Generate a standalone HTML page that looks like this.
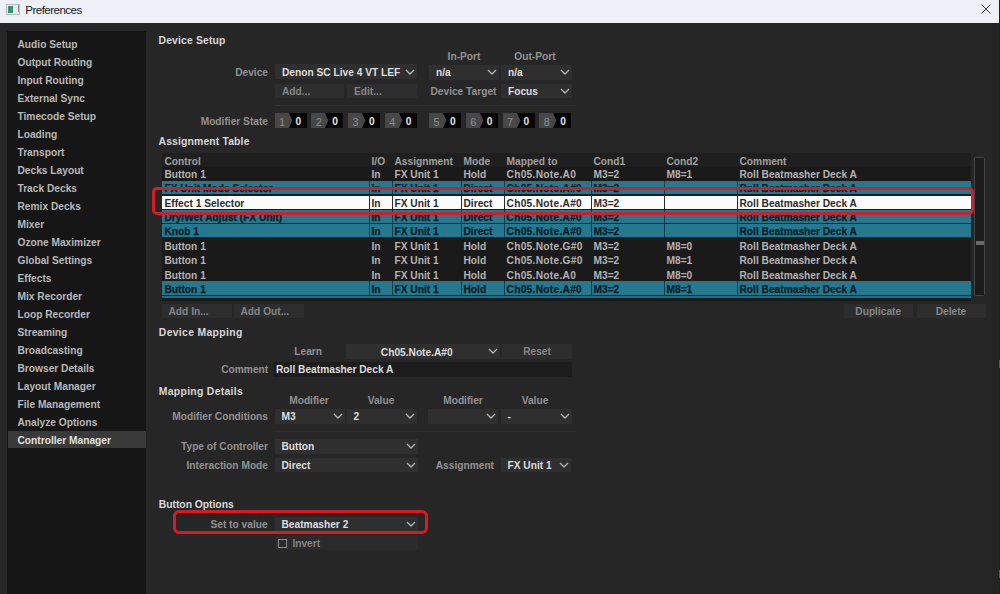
<!DOCTYPE html><html><head><meta charset="utf-8"><style>
*{margin:0;padding:0;box-sizing:border-box}
html,body{width:1000px;height:594px;overflow:hidden;background:#262626}
body>div,body>svg{position:absolute}
.t{position:absolute;white-space:nowrap;font-family:"Liberation Sans",sans-serif;font-weight:bold;font-size:10.2px;line-height:0;}
.t::before{content:"";}
.side{color:#b8b8b8}
.sel{color:#e0e0e0}
.hdr{color:#d8d8d8;font-size:10.4px}
.lbl{color:#929292}
.val{color:#dedede}
.btn{color:#858585}
.th{color:#a0a0a0}
.td{color:#b2b2b2}
.tt{color:#071f28;-webkit-text-stroke:0.25px #071f28}
.tw{color:#2a2a2a}
</style></head><body>
<div style="left:0;top:0;width:1000px;height:23px;background:#eef0f8"></div>
<div style="left:6px;top:3.5px;width:13.5px;height:11px;background:#e4ebe9;border:1px solid #b5bfbc"></div>
<div style="left:8px;top:5.5px;width:5px;height:7px;background:#3f8f76"></div>
<div style="left:17.5px;top:4.5px;width:1px;height:7.5px;background:#888"></div>
<div class="t" style="left:25.3px;top:9.5px;font-weight:normal;font-size:11.6px;letter-spacing:-0.55px;color:#1a1a1a">Preferences</div>
<svg width="12" height="12" viewBox="0 0 12 12" style="position:absolute;left:979.5px;top:3px"><path d="M1.5 1.5 L10.5 10.5 M10.5 1.5 L1.5 10.5" stroke="#3c3c3c" stroke-width="1" fill="none"/></svg>
<div style="left:7px;top:31px;width:139px;height:563px;background:#161616"></div>
<div class="t side" style="left:17.5px;top:44.70px;">Audio Setup</div>
<div class="t side" style="left:17.5px;top:62.70px;">Output Routing</div>
<div class="t side" style="left:17.5px;top:80.70px;">Input Routing</div>
<div class="t side" style="left:17.5px;top:98.70px;">External Sync</div>
<div class="t side" style="left:17.5px;top:116.70px;">Timecode Setup</div>
<div class="t side" style="left:17.5px;top:134.70px;">Loading</div>
<div class="t side" style="left:17.5px;top:152.70px;">Transport</div>
<div class="t side" style="left:17.5px;top:170.70px;">Decks Layout</div>
<div class="t side" style="left:17.5px;top:188.70px;">Track Decks</div>
<div class="t side" style="left:17.5px;top:206.70px;">Remix Decks</div>
<div class="t side" style="left:17.5px;top:224.70px;">Mixer</div>
<div class="t side" style="left:17.5px;top:242.70px;">Ozone Maximizer</div>
<div class="t side" style="left:17.5px;top:260.70px;">Global Settings</div>
<div class="t side" style="left:17.5px;top:278.70px;">Effects</div>
<div class="t side" style="left:17.5px;top:296.70px;">Mix Recorder</div>
<div class="t side" style="left:17.5px;top:314.70px;">Loop Recorder</div>
<div class="t side" style="left:17.5px;top:332.70px;">Streaming</div>
<div class="t side" style="left:17.5px;top:350.70px;">Broadcasting</div>
<div class="t side" style="left:17.5px;top:368.70px;">Browser Details</div>
<div class="t side" style="left:17.5px;top:386.70px;">Layout Manager</div>
<div class="t side" style="left:17.5px;top:404.70px;">File Management</div>
<div class="t side" style="left:17.5px;top:422.70px;">Analyze Options</div>
<div style="left:8px;top:430.5px;width:138px;height:17.5px;background:#3a3a3a"></div>
<div class="t side sel" style="left:17.5px;top:440.70px;">Controller Manager</div>
<div style="left:992px;top:23px;width:6.5px;height:571px;background:#242424"></div>
<div style="left:998.5px;top:0px;width:1.5px;height:594px;background:#1e1e1e"></div>
<div class="t hdr" style="left:158.5px;top:41.40px;letter-spacing:0.153px;">Device Setup</div>
<div class="t lbl" style="right:732.00px;top:73.00px;">Device</div>
<div style="left:275px;top:64px;width:142px;height:15px;background:#2f2f2f"></div>
<div class="t val" style="left:282px;top:72.60px;">Denon SC Live 4 VT LEF</div>
<svg width="10" height="6" viewBox="0 0 10 6" style="position:absolute;left:405px;top:68.5px"><path d="M1 1 L5 5 L9 1" fill="none" stroke="#b4b4b4" stroke-width="1.3"/></svg>
<div class="t lbl" style="left:264.00px;width:400px;text-align:center;top:56.60px;">In-Port</div>
<div class="t lbl" style="left:335.00px;width:400px;text-align:center;top:56.60px;">Out-Port</div>
<div style="left:429px;top:65px;width:70px;height:14.5px;background:#2f2f2f"></div>
<div class="t val" style="left:436px;top:73.10px;">n/a</div>
<svg width="10" height="6" viewBox="0 0 10 6" style="position:absolute;left:487px;top:69.25px"><path d="M1 1 L5 5 L9 1" fill="none" stroke="#b4b4b4" stroke-width="1.3"/></svg>
<div style="left:501px;top:65px;width:71px;height:14.5px;background:#2f2f2f"></div>
<div class="t val" style="left:508px;top:73.10px;">n/a</div>
<svg width="10" height="6" viewBox="0 0 10 6" style="position:absolute;left:560px;top:69.25px"><path d="M1 1 L5 5 L9 1" fill="none" stroke="#b4b4b4" stroke-width="1.3"/></svg>
<div style="left:275px;top:83.5px;width:69px;height:14px;background:#2d2d2d"></div>
<div class="t btn" style="left:282px;top:91.50px;">Add...</div>
<div style="left:347px;top:83.5px;width:70px;height:14px;background:#2d2d2d"></div>
<div class="t btn" style="left:354px;top:91.50px;">Edit...</div>
<div class="t lbl" style="right:503.50px;top:91.50px;">Device Target</div>
<div style="left:501px;top:83.5px;width:71px;height:14.5px;background:#2f2f2f"></div>
<div class="t val" style="left:508px;top:91.60px;">Focus</div>
<svg width="10" height="6" viewBox="0 0 10 6" style="position:absolute;left:560px;top:87.75px"><path d="M1 1 L5 5 L9 1" fill="none" stroke="#b4b4b4" stroke-width="1.3"/></svg>
<div style="left:275px;top:105px;width:301px;height:1px;background:#303030"></div>
<div style="left:274px;top:431px;width:301px;height:1px;background:#2c2c2c"></div>
<div style="left:998.5px;top:360px;width:1.5px;height:8px;background:#5a5a5a"></div>
<div style="left:998.5px;top:570px;width:1.5px;height:8px;background:#5a5a5a"></div>
<div class="t lbl" style="right:732.00px;top:121.50px;">Modifier State</div>
<svg width="32" height="15" style="position:absolute;left:274.5px;top:113px"><path d="M0 0H14L17.5 7.5L14 15H0Z" fill="#474747"/><path d="M14 0H32V15H14L17.5 7.5Z" fill="#050505"/></svg>
<div class="t lbl" style="left:279.0px;top:121.50px;color:#8e8e8e;font-weight:normal;font-size:10.8px">1</div>
<div class="t val" style="left:295.5px;top:121.50px;color:#e4e4e4">0</div>
<svg width="32" height="15" style="position:absolute;left:311.25px;top:113px"><path d="M0 0H14L17.5 7.5L14 15H0Z" fill="#474747"/><path d="M14 0H32V15H14L17.5 7.5Z" fill="#050505"/></svg>
<div class="t lbl" style="left:315.75px;top:121.50px;color:#8e8e8e;font-weight:normal;font-size:10.8px">2</div>
<div class="t val" style="left:332.25px;top:121.50px;color:#e4e4e4">0</div>
<svg width="32" height="15" style="position:absolute;left:348.0px;top:113px"><path d="M0 0H14L17.5 7.5L14 15H0Z" fill="#474747"/><path d="M14 0H32V15H14L17.5 7.5Z" fill="#050505"/></svg>
<div class="t lbl" style="left:352.5px;top:121.50px;color:#8e8e8e;font-weight:normal;font-size:10.8px">3</div>
<div class="t val" style="left:369.0px;top:121.50px;color:#e4e4e4">0</div>
<svg width="32" height="15" style="position:absolute;left:384.75px;top:113px"><path d="M0 0H14L17.5 7.5L14 15H0Z" fill="#474747"/><path d="M14 0H32V15H14L17.5 7.5Z" fill="#050505"/></svg>
<div class="t lbl" style="left:389.25px;top:121.50px;color:#8e8e8e;font-weight:normal;font-size:10.8px">4</div>
<div class="t val" style="left:405.75px;top:121.50px;color:#e4e4e4">0</div>
<svg width="32" height="15" style="position:absolute;left:429.0px;top:113px"><path d="M0 0H14L17.5 7.5L14 15H0Z" fill="#474747"/><path d="M14 0H32V15H14L17.5 7.5Z" fill="#050505"/></svg>
<div class="t lbl" style="left:433.5px;top:121.50px;color:#8e8e8e;font-weight:normal;font-size:10.8px">5</div>
<div class="t val" style="left:450.0px;top:121.50px;color:#e4e4e4">0</div>
<svg width="32" height="15" style="position:absolute;left:465.75px;top:113px"><path d="M0 0H14L17.5 7.5L14 15H0Z" fill="#474747"/><path d="M14 0H32V15H14L17.5 7.5Z" fill="#050505"/></svg>
<div class="t lbl" style="left:470.25px;top:121.50px;color:#8e8e8e;font-weight:normal;font-size:10.8px">6</div>
<div class="t val" style="left:486.75px;top:121.50px;color:#e4e4e4">0</div>
<svg width="32" height="15" style="position:absolute;left:502.5px;top:113px"><path d="M0 0H14L17.5 7.5L14 15H0Z" fill="#474747"/><path d="M14 0H32V15H14L17.5 7.5Z" fill="#050505"/></svg>
<div class="t lbl" style="left:507.0px;top:121.50px;color:#8e8e8e;font-weight:normal;font-size:10.8px">7</div>
<div class="t val" style="left:523.5px;top:121.50px;color:#e4e4e4">0</div>
<svg width="32" height="15" style="position:absolute;left:539.25px;top:113px"><path d="M0 0H14L17.5 7.5L14 15H0Z" fill="#474747"/><path d="M14 0H32V15H14L17.5 7.5Z" fill="#050505"/></svg>
<div class="t lbl" style="left:543.75px;top:121.50px;color:#8e8e8e;font-weight:normal;font-size:10.8px">8</div>
<div class="t val" style="left:560.25px;top:121.50px;color:#e4e4e4">0</div>
<div class="t hdr" style="left:158.5px;top:142.20px;letter-spacing:0.146px;">Assignment Table</div>
<div style="left:161.5px;top:153px;width:809.5px;height:148px;background:#1a1a1a"></div>
<div style="left:161.5px;top:153px;width:809.5px;height:13.5px;background:#1f1f1f"></div>
<div class="t th" style="left:164.5px;top:162.10px;">Control</div>
<div class="t th" style="left:371.5px;top:162.10px;">I/O</div>
<div class="t th" style="left:394.5px;top:162.10px;">Assignment</div>
<div class="t th" style="left:463.5px;top:162.10px;">Mode</div>
<div class="t th" style="left:506.5px;top:162.10px;">Mapped to</div>
<div class="t th" style="left:593.5px;top:162.10px;">Cond1</div>
<div class="t th" style="left:666.5px;top:162.10px;">Cond2</div>
<div class="t th" style="left:739.5px;top:162.10px;">Comment</div>
<div style="left:161.5px;top:295.5px;width:809.5px;height:2.8px;background:#226c80"></div>
<div class="t td" style="left:164.5px;top:175.05px;">Button 1</div>
<div class="t td" style="left:371.5px;top:175.05px;">In</div>
<div class="t td" style="left:394.5px;top:175.05px;">FX Unit 1</div>
<div class="t td" style="left:463.5px;top:175.05px;">Hold</div>
<div class="t td" style="left:506.5px;top:175.05px;letter-spacing:0.28px;">Ch05.Note.A0</div>
<div class="t td" style="left:593.5px;top:175.05px;">M3=2</div>
<div class="t td" style="left:666.5px;top:175.05px;">M8=1</div>
<div class="t td" style="left:739.5px;top:175.05px;">Roll Beatmasher Deck A</div>
<div style="left:161.5px;top:181.0px;width:809.5px;height:13.35px;background:#26788e"></div>
<div style="left:368.5px;top:181.0px;width:1.2px;height:13.35px;background:#123d4a"></div>
<div style="left:391.5px;top:181.0px;width:1.2px;height:13.35px;background:#123d4a"></div>
<div style="left:460.5px;top:181.0px;width:1.2px;height:13.35px;background:#123d4a"></div>
<div style="left:503.5px;top:181.0px;width:1.2px;height:13.35px;background:#123d4a"></div>
<div style="left:590.5px;top:181.0px;width:1.2px;height:13.35px;background:#123d4a"></div>
<div style="left:663.5px;top:181.0px;width:1.2px;height:13.35px;background:#123d4a"></div>
<div style="left:736.5px;top:181.0px;width:1.2px;height:13.35px;background:#123d4a"></div>
<div class="t tt" style="left:164.5px;top:189.40px;">FX Unit Mode Selector</div>
<div class="t tt" style="left:371.5px;top:189.40px;">In</div>
<div class="t tt" style="left:394.5px;top:189.40px;">FX Unit 1</div>
<div class="t tt" style="left:463.5px;top:189.40px;">Direct</div>
<div class="t tt" style="left:506.5px;top:189.40px;letter-spacing:0.28px;">Ch05.Note.A#0</div>
<div class="t tt" style="left:593.5px;top:189.40px;">M3=2</div>
<div class="t tt" style="left:739.5px;top:189.40px;">Roll Beatmasher Deck A</div>
<div style="left:161.5px;top:195.85px;width:809.5px;height:12.85px;background:#fbfbfb"></div>
<div style="left:368.5px;top:195.35px;width:1.2px;height:13.35px;background:#2a2a2a"></div>
<div style="left:391.5px;top:195.35px;width:1.2px;height:13.35px;background:#2a2a2a"></div>
<div style="left:460.5px;top:195.35px;width:1.2px;height:13.35px;background:#2a2a2a"></div>
<div style="left:503.5px;top:195.35px;width:1.2px;height:13.35px;background:#2a2a2a"></div>
<div style="left:590.5px;top:195.35px;width:1.2px;height:13.35px;background:#2a2a2a"></div>
<div style="left:663.5px;top:195.35px;width:1.2px;height:13.35px;background:#2a2a2a"></div>
<div style="left:736.5px;top:195.35px;width:1.2px;height:13.35px;background:#2a2a2a"></div>
<div class="t tw" style="left:164.5px;top:203.75px;">Effect 1 Selector</div>
<div class="t tw" style="left:371.5px;top:203.75px;">In</div>
<div class="t tw" style="left:394.5px;top:203.75px;">FX Unit 1</div>
<div class="t tw" style="left:463.5px;top:203.75px;">Direct</div>
<div class="t tw" style="left:506.5px;top:203.75px;letter-spacing:0.28px;">Ch05.Note.A#0</div>
<div class="t tw" style="left:593.5px;top:203.75px;">M3=2</div>
<div class="t tw" style="left:739.5px;top:203.75px;">Roll Beatmasher Deck A</div>
<div style="left:161.5px;top:209.7px;width:809.5px;height:13.35px;background:#26788e"></div>
<div style="left:368.5px;top:209.7px;width:1.2px;height:13.35px;background:#123d4a"></div>
<div style="left:391.5px;top:209.7px;width:1.2px;height:13.35px;background:#123d4a"></div>
<div style="left:460.5px;top:209.7px;width:1.2px;height:13.35px;background:#123d4a"></div>
<div style="left:503.5px;top:209.7px;width:1.2px;height:13.35px;background:#123d4a"></div>
<div style="left:590.5px;top:209.7px;width:1.2px;height:13.35px;background:#123d4a"></div>
<div style="left:663.5px;top:209.7px;width:1.2px;height:13.35px;background:#123d4a"></div>
<div style="left:736.5px;top:209.7px;width:1.2px;height:13.35px;background:#123d4a"></div>
<div class="t tt" style="left:164.5px;top:218.10px;">Dry/Wet Adjust (FX Unit)</div>
<div class="t tt" style="left:371.5px;top:218.10px;">In</div>
<div class="t tt" style="left:394.5px;top:218.10px;">FX Unit 1</div>
<div class="t tt" style="left:463.5px;top:218.10px;">Direct</div>
<div class="t tt" style="left:506.5px;top:218.10px;letter-spacing:0.28px;">Ch05.Note.A#0</div>
<div class="t tt" style="left:593.5px;top:218.10px;">M3=2</div>
<div class="t tt" style="left:739.5px;top:218.10px;">Roll Beatmasher Deck A</div>
<div style="left:161.5px;top:224.05px;width:809.5px;height:13.35px;background:#26788e"></div>
<div style="left:368.5px;top:224.05px;width:1.2px;height:13.35px;background:#123d4a"></div>
<div style="left:391.5px;top:224.05px;width:1.2px;height:13.35px;background:#123d4a"></div>
<div style="left:460.5px;top:224.05px;width:1.2px;height:13.35px;background:#123d4a"></div>
<div style="left:503.5px;top:224.05px;width:1.2px;height:13.35px;background:#123d4a"></div>
<div style="left:590.5px;top:224.05px;width:1.2px;height:13.35px;background:#123d4a"></div>
<div style="left:663.5px;top:224.05px;width:1.2px;height:13.35px;background:#123d4a"></div>
<div style="left:736.5px;top:224.05px;width:1.2px;height:13.35px;background:#123d4a"></div>
<div class="t tt" style="left:164.5px;top:232.45px;">Knob 1</div>
<div class="t tt" style="left:371.5px;top:232.45px;">In</div>
<div class="t tt" style="left:394.5px;top:232.45px;">FX Unit 1</div>
<div class="t tt" style="left:463.5px;top:232.45px;">Direct</div>
<div class="t tt" style="left:506.5px;top:232.45px;letter-spacing:0.28px;">Ch05.Note.A#0</div>
<div class="t tt" style="left:593.5px;top:232.45px;">M3=2</div>
<div class="t tt" style="left:739.5px;top:232.45px;">Roll Beatmasher Deck A</div>
<div class="t td" style="left:164.5px;top:246.80px;">Button 1</div>
<div class="t td" style="left:371.5px;top:246.80px;">In</div>
<div class="t td" style="left:394.5px;top:246.80px;">FX Unit 1</div>
<div class="t td" style="left:463.5px;top:246.80px;">Hold</div>
<div class="t td" style="left:506.5px;top:246.80px;letter-spacing:0.28px;">Ch05.Note.G#0</div>
<div class="t td" style="left:593.5px;top:246.80px;">M3=2</div>
<div class="t td" style="left:666.5px;top:246.80px;">M8=0</div>
<div class="t td" style="left:739.5px;top:246.80px;">Roll Beatmasher Deck A</div>
<div class="t td" style="left:164.5px;top:261.15px;">Button 1</div>
<div class="t td" style="left:371.5px;top:261.15px;">In</div>
<div class="t td" style="left:394.5px;top:261.15px;">FX Unit 1</div>
<div class="t td" style="left:463.5px;top:261.15px;">Hold</div>
<div class="t td" style="left:506.5px;top:261.15px;letter-spacing:0.28px;">Ch05.Note.G#0</div>
<div class="t td" style="left:593.5px;top:261.15px;">M3=2</div>
<div class="t td" style="left:666.5px;top:261.15px;">M8=1</div>
<div class="t td" style="left:739.5px;top:261.15px;">Roll Beatmasher Deck A</div>
<div class="t td" style="left:164.5px;top:275.50px;">Button 1</div>
<div class="t td" style="left:371.5px;top:275.50px;">In</div>
<div class="t td" style="left:394.5px;top:275.50px;">FX Unit 1</div>
<div class="t td" style="left:463.5px;top:275.50px;">Hold</div>
<div class="t td" style="left:506.5px;top:275.50px;letter-spacing:0.28px;">Ch05.Note.A0</div>
<div class="t td" style="left:593.5px;top:275.50px;">M3=2</div>
<div class="t td" style="left:666.5px;top:275.50px;">M8=0</div>
<div class="t td" style="left:739.5px;top:275.50px;">Roll Beatmasher Deck A</div>
<div style="left:161.5px;top:281.45px;width:809.5px;height:13.35px;background:#26788e"></div>
<div style="left:368.5px;top:281.45px;width:1.2px;height:13.35px;background:#123d4a"></div>
<div style="left:391.5px;top:281.45px;width:1.2px;height:13.35px;background:#123d4a"></div>
<div style="left:460.5px;top:281.45px;width:1.2px;height:13.35px;background:#123d4a"></div>
<div style="left:503.5px;top:281.45px;width:1.2px;height:13.35px;background:#123d4a"></div>
<div style="left:590.5px;top:281.45px;width:1.2px;height:13.35px;background:#123d4a"></div>
<div style="left:663.5px;top:281.45px;width:1.2px;height:13.35px;background:#123d4a"></div>
<div style="left:736.5px;top:281.45px;width:1.2px;height:13.35px;background:#123d4a"></div>
<div class="t tt" style="left:164.5px;top:289.85px;">Button 1</div>
<div class="t tt" style="left:371.5px;top:289.85px;">In</div>
<div class="t tt" style="left:394.5px;top:289.85px;">FX Unit 1</div>
<div class="t tt" style="left:463.5px;top:289.85px;">Hold</div>
<div class="t tt" style="left:506.5px;top:289.85px;letter-spacing:0.28px;">Ch05.Note.A#0</div>
<div class="t tt" style="left:593.5px;top:289.85px;">M3=2</div>
<div class="t tt" style="left:666.5px;top:289.85px;">M8=1</div>
<div class="t tt" style="left:739.5px;top:289.85px;">Roll Beatmasher Deck A</div>
<div style="left:974px;top:156.5px;width:11px;height:139px;background:#1c1c1c;border:1px solid #474747;border-radius:1.5px"></div>
<div style="left:976px;top:241px;width:7.5px;height:3.5px;background:#6a6a6a"></div>
<div style="left:151.5px;top:187px;width:822.5px;height:28px;border:3px solid #d21e28;border-radius:5px"></div>
<div style="left:161.5px;top:304px;width:70px;height:14px;background:#2d2d2d"></div>
<div class="t btn" style="left:168.5px;top:312.00px;">Add In...</div>
<div style="left:233.5px;top:304px;width:70px;height:14px;background:#2d2d2d"></div>
<div class="t btn" style="left:240.5px;top:312.00px;">Add Out...</div>
<div style="left:844px;top:304px;width:68.5px;height:14px;background:#2d2d2d"></div>
<div class="t btn" style="left:678.25px;width:400px;text-align:center;top:312.00px;">Duplicate</div>
<div style="left:916.5px;top:304px;width:69px;height:14px;background:#2d2d2d"></div>
<div class="t btn" style="left:751.00px;width:400px;text-align:center;top:312.00px;">Delete</div>
<div class="t hdr" style="left:158.8px;top:333.00px;letter-spacing:0.333px;">Device Mapping</div>
<div class="t lbl" style="right:678.00px;top:352.20px;">Learn</div>
<div style="left:346px;top:343.5px;width:153.5px;height:15.5px;background:#2f2f2f"></div>
<div class="t val" style="left:216.75px;width:400px;text-align:center;top:352.60px;">Ch05.Note.A#0</div>
<svg width="10" height="6" viewBox="0 0 10 6" style="position:absolute;left:487.5px;top:348.25px"><path d="M1 1 L5 5 L9 1" fill="none" stroke="#b4b4b4" stroke-width="1.3"/></svg>
<div style="left:502px;top:343.5px;width:70px;height:15.5px;background:#2d2d2d"></div>
<div class="t btn" style="left:509px;top:353.00px;"></div>
<div class="t btn" style="left:337.00px;width:400px;text-align:center;top:352.20px;">Reset</div>
<div class="t lbl" style="right:731.80px;top:370.20px;">Comment</div>
<div style="left:273px;top:361.5px;width:299px;height:15px;background:#1d1d1d"></div>
<div class="t val" style="left:276px;top:370.20px;">Roll Beatmasher Deck A</div>
<div class="t hdr" style="left:158.8px;top:391.80px;letter-spacing:0.304px;">Mapping Details</div>
<div class="t lbl" style="left:109.00px;width:400px;text-align:center;top:400.80px;">Modifier</div>
<div class="t lbl" style="left:181.00px;width:400px;text-align:center;top:400.80px;">Value</div>
<div class="t lbl" style="left:263.00px;width:400px;text-align:center;top:400.80px;">Modifier</div>
<div class="t lbl" style="left:335.00px;width:400px;text-align:center;top:400.80px;">Value</div>
<div class="t lbl" style="right:732.00px;top:417.00px;">Modifier Conditions</div>
<div style="left:274.5px;top:409px;width:70.5px;height:14.5px;background:#2f2f2f"></div>
<div class="t val" style="left:281.5px;top:417.10px;">M3</div>
<svg width="10" height="6" viewBox="0 0 10 6" style="position:absolute;left:333.0px;top:413.25px"><path d="M1 1 L5 5 L9 1" fill="none" stroke="#b4b4b4" stroke-width="1.3"/></svg>
<div style="left:346.5px;top:409px;width:70.5px;height:14.5px;background:#2f2f2f"></div>
<div class="t val" style="left:353.5px;top:417.10px;">2</div>
<svg width="10" height="6" viewBox="0 0 10 6" style="position:absolute;left:405.0px;top:413.25px"><path d="M1 1 L5 5 L9 1" fill="none" stroke="#b4b4b4" stroke-width="1.3"/></svg>
<div style="left:427.5px;top:409px;width:70px;height:14.5px;background:#2f2f2f"></div>
<svg width="10" height="6" viewBox="0 0 10 6" style="position:absolute;left:485.5px;top:413.25px"><path d="M1 1 L5 5 L9 1" fill="none" stroke="#b4b4b4" stroke-width="1.3"/></svg>
<div style="left:500.5px;top:409px;width:71px;height:14.5px;background:#2f2f2f"></div>
<div class="t val" style="left:507.5px;top:417.10px;">-</div>
<svg width="10" height="6" viewBox="0 0 10 6" style="position:absolute;left:559.5px;top:413.25px"><path d="M1 1 L5 5 L9 1" fill="none" stroke="#b4b4b4" stroke-width="1.3"/></svg>
<div class="t lbl" style="right:732.00px;top:446.60px;">Type of Controller</div>
<div style="left:274.5px;top:439px;width:143.5px;height:14.5px;background:#2f2f2f"></div>
<div class="t val" style="left:281.5px;top:447.10px;">Button</div>
<svg width="10" height="6" viewBox="0 0 10 6" style="position:absolute;left:406.0px;top:443.25px"><path d="M1 1 L5 5 L9 1" fill="none" stroke="#b4b4b4" stroke-width="1.3"/></svg>
<div class="t lbl" style="right:732.00px;top:465.60px;">Interaction Mode</div>
<div style="left:274.5px;top:458px;width:143.5px;height:14px;background:#2f2f2f"></div>
<div class="t val" style="left:281.5px;top:465.60px;">Direct</div>
<svg width="10" height="6" viewBox="0 0 10 6" style="position:absolute;left:406.0px;top:462.0px"><path d="M1 1 L5 5 L9 1" fill="none" stroke="#b4b4b4" stroke-width="1.3"/></svg>
<div class="t lbl" style="right:506.00px;top:465.60px;">Assignment</div>
<div style="left:500.5px;top:458px;width:70.5px;height:14px;background:#2f2f2f"></div>
<div class="t val" style="left:507.5px;top:465.60px;">FX Unit 1</div>
<svg width="10" height="6" viewBox="0 0 10 6" style="position:absolute;left:559.0px;top:462.0px"><path d="M1 1 L5 5 L9 1" fill="none" stroke="#b4b4b4" stroke-width="1.3"/></svg>
<div class="t hdr" style="left:158.8px;top:505.00px;letter-spacing:-0.052px;">Button Options</div>
<div class="t lbl" style="right:732.40px;top:524.60px;">Set to value</div>
<div style="left:274.5px;top:516.5px;width:143.5px;height:14.5px;background:#2f2f2f"></div>
<div class="t val" style="left:281.5px;top:524.60px;">Beatmasher 2</div>
<svg width="10" height="6" viewBox="0 0 10 6" style="position:absolute;left:406.0px;top:520.75px"><path d="M1 1 L5 5 L9 1" fill="none" stroke="#b4b4b4" stroke-width="1.3"/></svg>
<div style="left:173px;top:510px;width:254.5px;height:23.5px;border:3px solid #d41c22;border-radius:6px"></div>
<div style="left:274.5px;top:535.5px;width:143.5px;height:14.5px;background:#2b2b2b"></div>
<div style="left:277.5px;top:539px;width:9px;height:9px;border:1px solid #8a8a8a"></div>
<div class="t btn" style="left:292.4px;top:543.80px;">Invert</div>
</body></html>
